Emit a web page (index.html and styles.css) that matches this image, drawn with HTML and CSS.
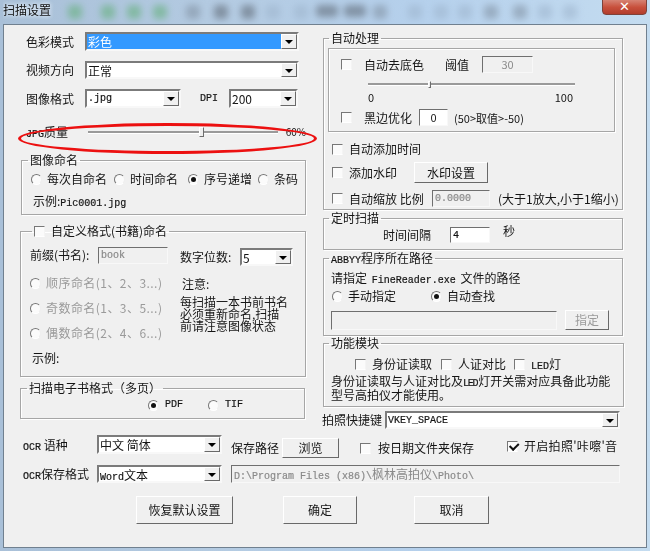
FILE: index.html
```html
<!DOCTYPE html>
<html lang="zh-CN">
<head>
<meta charset="utf-8">
<title>扫描设置</title>
<link rel="stylesheet" href="styles.css">
</head>
<body>
<div class="window">
  <header class="titlebar">
    <span class="title">扫描设置</span>
    <div class="blurred" aria-hidden="true">
      <i class="g"></i><i class="g"></i><i class="g"></i><i class="g"></i><i class="s"></i><i class="d"></i><i class="d"></i><i class="f"></i><i class="f"></i><i class="d wide"></i><i class="d wide"></i><i class="s"></i><i class="f"></i><i class="f"></i><i class="f"></i><i class="s"></i><i class="s"></i><i class="f"></i><i class="f"></i>
    </div>
    <div class="close">✕</div>
  </header>
  <main class="dialog">
    <div class="columns">
      <section class="left">
        <div class="row r1"><span class="lbl">色彩模式</span><div class="combo w214 h19"><span class="val sel">彩色</span><b class="drop"></b></div></div>
        <div class="row r2"><span class="lbl">视频方向</span><div class="combo w214 h18"><span class="val">正常</span><b class="drop"></b></div></div>
        <div class="row r3"><span class="lbl">图像格式</span><div class="combo w96 h19"><span class="val en">.jpg</span><b class="drop"></b></div><span class="en dpi">DPI</span><div class="combo w69 h19"><span class="val">200</span><b class="drop"></b></div></div>
        <div class="row jpg"><span class="lbl short"><span class="en">JPG</span>质量</span>
          <div class="slider s190"><b class="thumb t60"></b></div><span class="pct">60%</span>
          <div class="ellipse" aria-hidden="true"></div>
        </div>
        <fieldset class="group naming">
          <legend>图像命名</legend>
          <div class="row radios"><i class="radio"></i><span class="rl r-a">每次自命名</span><i class="radio"></i><span class="rl r-b">时间命名</span><i class="radio on"></i><span class="rl r-c">序号递增</span><i class="radio"></i><span class="rl">条码</span></div>
          <div class="sample">示例:<span class="en">Pic0001.jpg</span></div>
        </fieldset>
        <fieldset class="group custom">
          <legend class="cblegend"><i class="check"></i><span>自定义格式(书籍)命名</span></legend>
          <div class="custom-grid">
            <div class="cg-left">
              <div class="row prefix"><span class="pl">前缀(书名):</span><div class="field dis fw70 en">book</div></div>
              <div class="row opt first"><i class="radio"></i><span class="gray">顺序命名(1、2、3...)</span></div>
              <div class="row opt"><i class="radio"></i><span class="gray">奇数命名(1、3、5...)</span></div>
              <div class="row opt"><i class="radio"></i><span class="gray">偶数命名(2、4、6...)</span></div>
              <div class="eg">示例:</div>
            </div>
            <div class="cg-right">
              <div class="row digits"><span class="dl">数字位数:</span><div class="combo w53 h18"><span class="val">5</span><b class="drop"></b></div></div>
              <div class="note-h">注意:</div>
              <p class="note">每扫描一本书前书名必须重新命名,扫描前请注意图像状态</p>
            </div>
          </div>
        </fieldset>
        <fieldset class="group ebook">
          <legend>扫描电子书格式（多页）</legend>
          <div class="row ebook-row"><i class="radio on"></i><span class="en pdf">PDF</span><i class="radio"></i><span class="en">TIF</span></div>
        </fieldset>
      </section>
      <section class="right">
        <fieldset class="group auto">
          <legend>自动处理</legend>
          <div class="panel">
            <div class="row p1"><i class="check"></i><span class="a1">自动去底色</span><span class="a2">阈值</span><div class="field dis thr">30</div></div>
            <div class="slider s207"><b class="thumb t30"></b></div>
            <div class="ticks"><span>0</span><span>100</span></div>
            <div class="row p3"><i class="check"></i><span class="a3">黑边优化</span><div class="field zero">0</div><span class="hint">(50&gt;取值&gt;-50)</span></div>
          </div>
          <div class="row o1"><i class="check"></i><span class="ol">自动添加时间</span></div>
          <div class="row o2"><i class="check"></i><span class="ol wm">添加水印</span><button class="btn wmb">水印设置</button></div>
          <div class="row o3"><i class="check"></i><span class="ol zm">自动缩放 比例</span><div class="field dis ratio en">0.0000</div><span class="zhint">(大于1放大,小于1缩小)</span></div>
        </fieldset>
        <fieldset class="group timer">
          <legend>定时扫描</legend>
          <div class="row tr"><span class="tl">时间间隔</span><div class="field secs en">4</div><span class="sec">秒</span></div>
        </fieldset>
        <fieldset class="group abbyy">
          <legend><span class="en">ABBYY</span>程序所在路径</legend>
          <div class="ab1">请指定 <span class="en fr">FineReader.exe</span> 文件的路径</div>
          <div class="row ab2"><i class="radio"></i><span class="m1">手动指定</span><i class="radio on"></i><span class="m2">自动查找</span></div>
          <div class="row ab3"><div class="field dis path"></div><button class="btn dimmed spec">指定</button></div>
        </fieldset>
        <fieldset class="group modules">
          <legend>功能模块</legend>
          <div class="row mods"><i class="check"></i><span class="m-a">身份证读取</span><i class="check"></i><span class="m-b">人证对比</span><i class="check"></i><span class="m-c"><span class="en">LED</span>灯</span></div>
          <p class="modnote">身份证读取与人证对比及<span class="en led">LED</span>灯开关需对应具备此功能型号高拍仪才能使用。</p>
        </fieldset>
        <div class="row shortcut"><span class="sl">拍照快捷键</span><div class="combo w235 h18"><span class="val en">VKEY_SPACE</span><b class="drop"></b></div></div>
      </section>
    </div>
    <div class="bottom b1">
      <span class="bl"><span class="en">OCR</span> 语种</span>
      <div class="combo w125 h19 top"><span class="val">中文 简体</span><b class="drop"></b></div>
      <span class="save">保存路径</span>
      <button class="btn browse">浏览</button>
      <i class="check c-date"></i><span class="date">按日期文件夹保存</span>
      <i class="check on c-snd"></i><span class="snd">开启拍照'咔嚓'音</span>
    </div>
    <div class="bottom b2">
      <span class="bl"><span class="en">OCR</span>保存格式</span>
      <div class="combo w125 h18"><span class="val"><span class="en">Word</span>文本</span><b class="drop"></b></div>
      <div class="field dis savepath en">D:\Program Files (x86)\<span class="cjk">枫林高拍仪</span>\Photo\</div>
    </div>
    <div class="bottom b3">
      <button class="btn restore">恢复默认设置</button>
      <button class="btn ok">确定</button>
      <button class="btn cancel">取消</button>
    </div>
  </main>
</div>
</body>
</html>
```

FILE: styles.css
```css
* { box-sizing: border-box; }
html, body { margin: 0; padding: 0; }
body { width: 650px; height: 551px; overflow: hidden; font-family: "Noto Sans CJK SC", "Liberation Sans", sans-serif; font-size: 12px; line-height: 14px; color: #151515; }
.window { position: relative; width: 650px; height: 551px; padding: 0 3px 3px; background: linear-gradient(90deg, #a9c0d8 0%, #b4cbe2 35%, #b5d0ec 65%, #c4dcf0 100%); }
.titlebar { position: relative; height: 24px; overflow: hidden; display: flex; }
.title { font-size: 12px; line-height: 14px; margin-top: 3px; color: #111; text-shadow: 0 0 4px #eaf2fa, 0 0 4px #eaf2fa; filter: blur(0.3px); }
.blurred { position: absolute; left: 63px; top: 5px; display: grid; grid-template-columns: 33px 26px 26px 33px 28px 27px 25px 28px 22px 28px 29px 35px 26px 24px 26px 29px 25px 25px 25px; filter: blur(3.5px); opacity: .55; }
.blurred i { display: block; width: 14px; height: 14px; border-radius: 4px; margin-left: 2px; }
.blurred .g { background: #5fae74; }
.blurred .s { background: #7e8e9f; }
.blurred .d { background: #59636f; }
.blurred .f { background: #9db4cc; }
.blurred .wide { width: 22px; height: 12px; }
.close { position: absolute; left: 599px; top: -2px; width: 45px; height: 17px; border: 1px solid #7d423a; border-radius: 0 0 4px 4px; background: linear-gradient(#d88a7b, #c8503c 55%, #b23d2c); color: #fff; text-align: center; font: bold 13px/16px "DejaVu Sans", sans-serif; }
.dialog { width: 644px; height: 524px; background: #f0f0f0; border: 1px solid #70808f; padding: 5px 0 0 16px; filter: blur(0.3px); }
.columns { display: flex; height: 400px; }
.left { width: 286px; padding-top: 2px; }
.right { width: 301px; margin-left: 17px; }
.row { display: flex; align-items: center; }
.en { font-family: "Liberation Mono", "Noto Sans CJK SC", monospace; font-size: 10px; -webkit-text-stroke: 0.2px; line-height: 1; }
.cjk { font-family: "Noto Sans CJK SC", sans-serif; font-size: 12px; -webkit-text-stroke: 0; }
.r1 { height: 19px; }
.r2 { height: 18px; margin-top: 10px; }
.r3 { height: 19px; margin-top: 10px; }
.lbl { width: 59px; margin-left: 6px; }
.dpi { margin: 0 11px 0 19px; }
.combo { display: flex; background: #fff; border: 2px solid; border-color: #7b7b7b #f8f8f8 #f8f8f8 #7b7b7b; flex: none; }
.val { flex: 1; padding-left: 1px; line-height: 15px; white-space: nowrap; }
.val.en { line-height: 15px; }
.val.sel { background: #3399ff; color: #fff; }
.drop { position: relative; width: 16px; background: #f0f0f0; border: 1px solid; border-color: #fff #696969 #696969 #fff; flex: none; }
.drop::after { content: ""; position: absolute; left: 3px; top: 5px; border: 4px solid transparent; border-top: 4px solid #000; border-bottom: 0; }
.w214 { width: 214px; } .w96 { width: 96px; } .w69 { width: 69px; } .w53 { width: 53px; } .w235 { width: 235px; } .w125 { width: 125px; }
.h19 { height: 19px; } .h18 { height: 18px; }
.top { align-self: flex-start; }
.jpg { position: relative; height: 18px; margin-top: 15px; }
.short { width: 61px; margin-right: 1px; }
.slider { position: relative; height: 6px; flex: none; }
.slider::before { content: ""; position: absolute; left: 0; right: 0; top: 2px; height: 2px; background: #9a9a9a; box-shadow: 0 1px 0 #fff; }
.thumb { position: absolute; top: -2px; width: 5px; height: 10px; background: #eee; border: 1px solid; border-color: #fff #6d6d6d #6d6d6d #fff; }
.s190 { width: 190px; } .s207 { width: 207px; margin: 8px 0 0 39px; }
.t60 { left: 111px; } .t30 { left: 60px; width: 3px; height: 7px; top: 0; }
.pct { margin-left: 8px; font-size: 10px; }
.ellipse { position: absolute; left: -2px; top: 0; width: 299px; height: 31px; border: 3px solid #ec1010; border-radius: 50%; }
.group { --pad: 0px; --lx: 6px; margin: 0; padding: 0 0 0 var(--pad); min-width: 0; border: 1px solid #a6a6a6; box-shadow: inset 1px 1px 0 #fff, 1px 1px 0 #fff; }
.group legend { margin-left: calc(var(--lx) - var(--pad)); padding: 0 2px; line-height: 16px; height: 16px; white-space: nowrap; }
.naming { --pad: 9px; margin: 11px 0 0 1px; width: 285px; height: 63px; padding-top: 2px; }
.radios { height: 14px; margin-top: 2px; }
.radio { position: relative; display: block; width: 11px; height: 11px; border-radius: 50%; background: #fbfbfb; border: 1px solid; border-color: #777 #eee #fff #777; flex: none; }
.radio.on::after { content: ""; position: absolute; left: 2px; top: 2px; width: 5px; height: 5px; border-radius: 50%; background: #111; }
.radio + span { margin-left: 5px; }
.r-a { width: 67px; } .r-b { width: 58px; } .r-c { width: 54px; }
.sample { margin: 8px 0 0 2px; }
.custom { --pad: 9px; margin-top: 8px; width: 286px; height: 154px; padding-top: 7px; }
.group .cblegend { display: flex; align-items: center; margin-left: 2px; padding: 0 2px; }
.check { position: relative; display: block; width: 11px; height: 11px; background: #fbfbfb; border: 1px solid; border-color: #777 #f4f4f4 #fff #777; flex: none; }
.check.on::after { content: ""; position: absolute; left: 1px; top: 0; width: 7px; height: 4px; border: solid #111; border-width: 0 0 2px 2px; transform: rotate(-45deg) translate(0, 1px); }
.cblegend .check { margin-right: 6px; }
.custom-grid { display: flex; }
.cg-left { width: 147px; }
.cg-right { width: 120px; margin-left: 3px; }
.prefix { height: 18px; }
.pl { width: 68px; white-space: nowrap; }
.field { height: 17px; background: #fff; border: 1px solid; border-color: #6f6f6f #f8f8f8 #f8f8f8 #6f6f6f; padding: 0 2px; line-height: 15px; white-space: nowrap; flex: none; }
.field.en { line-height: 15px; }
.field.dis { background: #f0f0f0; color: #8a8a8a; }
.fw70 { width: 70px; }
.opt { height: 14px; margin-top: 11px; }
.first { margin-top: 12px; }
.gray { color: #9a9a9a; white-space: nowrap; letter-spacing: 0.45px; }
.eg { margin: 11px 0 0 2px; }
.digits { height: 18px; margin-top: 2px; }
.dl { width: 60px; white-space: nowrap; }
.note-h { margin-top: 11px; margin-left: 2px; }
.note { margin: 5px 0 0; width: 108px; line-height: 12px; }
.ebook { --pad: 127px; margin-top: 3px; width: 285px; height: 39px; padding-top: 2px; }
.ebook-row { height: 14px; }
.ebook-row .radio + span { margin-left: 6px; }
.pdf { width: 43px; }
.auto { --pad: 4px; --lx: 5px; width: 300px; height: 180px; padding-top: 2px; }
.panel { width: 287px; height: 84px; border: 1px solid #a6a6a6; box-shadow: inset 1px 1px 0 #fff, 1px 1px 0 #fff; padding-top: 7px; }
.p1 { height: 17px; padding-left: 12px; }
.a1 { margin-left: 12px; width: 81px; }
.a2 { width: 37px; }
.thr { width: 51px; text-align: center; font-size: 11px; }
.ticks { display: flex; justify-content: space-between; width: 205px; margin: 4px 0 0 39px; height: 12px; font-size: 11px; line-height: 12px; }
.p3 { height: 17px; margin-top: 6px; padding-left: 12px; }
.a3 { margin-left: 12px; width: 55px; }
.zero { width: 29px; text-align: center; font-size: 11px; }
.hint { margin-left: 6px; font-size: 11px; white-space: nowrap; }
.o1, .o2, .o3 { padding-left: 4px; }
.o1 { height: 14px; margin-top: 10px; }
.o2 { height: 21px; margin-top: 6px; }
.o3 { height: 17px; margin-top: 7px; }
.ol { margin-left: 6px; }
.wm { width: 65px; }
.zm { width: 83px; white-space: nowrap; }
.btn { display: block; padding: 0; margin: 0; font: inherit; color: #151515; background: #f0f0f0; border: 1px solid; border-color: #fff #696969 #696969 #fff; }
.wmb { width: 74px; height: 21px; }
.ratio { width: 58px; }
.zhint { margin-left: 8px; font-size: 12px; white-space: nowrap; }
.timer { --lx: 5px; width: 300px; height: 40px; padding-top: 1px; }
.tr { height: 16px; }
.tl { margin-left: 59px; width: 67px; }
.secs { width: 40px; height: 16px; color: #111; }
.sec { margin: -8px 0 0 13px; }
.abbyy { --pad: 7px; --lx: 5px; width: 300px; height: 86px; padding-top: 5px; }
.ab1 { height: 14px; white-space: nowrap; }
.fr { margin: 0 2px; }
.ab2 { height: 14px; margin-top: 4px; }
.ab2 .radio { margin-left: 1px; }
.m1 { width: 82px; }
.ab3 { margin-top: 7px; }
.path { width: 226px; height: 19px; }
.spec { width: 44px; height: 20px; margin-left: 8px; }
.dimmed { color: #9a9a9a; }
.modules { --pad: 7px; --lx: 5px; width: 301px; margin-top: -1px; height: 72px; padding-top: 6px; }
.mods { height: 14px; padding-left: 24px; }
.mods .check + span { margin-left: 6px; }
.m-a { width: 69px; } .m-b { width: 56px; }
.modnote { margin: 4px 0 0; width: 286px; line-height: 12px; }
.led { letter-spacing: -1.3px; margin-right: 1px; }
.shortcut { margin: 4px 0 0 -1px; height: 18px; }
.sl { width: 63px; }
.bottom { display: flex; margin-left: 3px; }
.b1 { height: 23px; margin-top: 5px; }
.b1 > span, .b1 > i { align-self: flex-start; }
.bl { width: 74px; white-space: nowrap; }
.b1 .bl { margin-top: 3px; }
.b2 .bl { margin-top: 2px; }
.save { margin: 6px 0 0 9px; width: 51px; }
.browse { width: 57px; height: 20px; align-self: flex-end; }
.c-date { margin: 8px 0 0 21px; }
.date { margin: 6px 0 0 7px; width: 129px; white-space: nowrap; }
.c-snd { margin-top: 6px; }
.snd { margin: 4px 0 0 6px; white-space: nowrap; letter-spacing: 0.3px; }
.b2 { height: 18px; margin-top: 7px; }
.savepath { width: 389px; height: 18px; margin-left: 9px; }
.b3 { margin: 13px 0 0 116px; }
.b3 .btn { height: 28px; }
.restore { width: 97px; }
.ok { width: 74px; margin-left: 50px; }
.cancel { width: 75px; margin-left: 57px; }
```
